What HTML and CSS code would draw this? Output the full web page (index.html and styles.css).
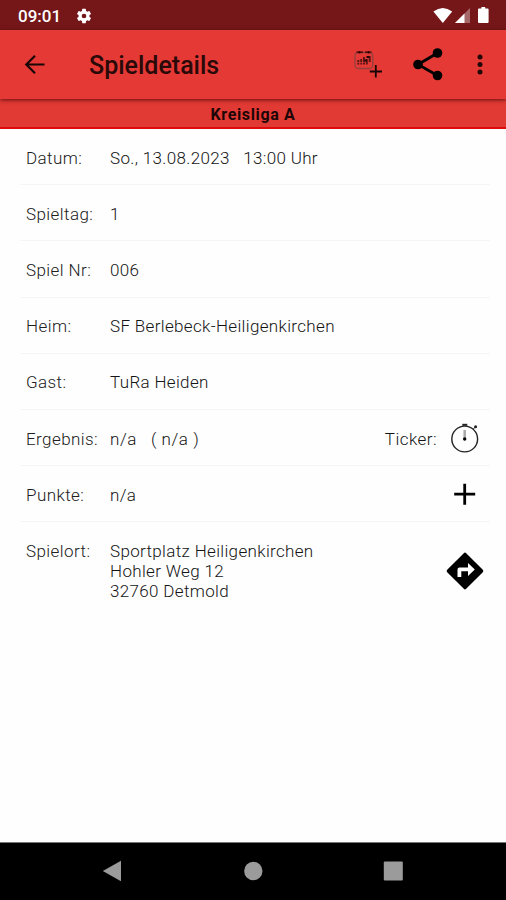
FILE: index.html
```html
<!DOCTYPE html>
<html lang="de">
<head>
<meta charset="utf-8">
<title>Spieldetails</title>
<link rel="stylesheet" href="styles.css">
</head>
<body>
<div class="screen">
  <div class="status">
    <span class="clock">09:01</span>
    <svg class="gear" width="18" height="18" viewBox="0 0 24 24" fill="#fff"><path d="M19.14 12.94c.04-.3.06-.61.06-.94 0-.32-.02-.64-.07-.94l2.03-1.58a.49.49 0 0 0 .12-.61l-1.92-3.32a.49.49 0 0 0-.59-.22l-2.39.96c-.5-.38-1.03-.7-1.62-.94l-.36-2.54a.48.48 0 0 0-.48-.41h-3.84c-.24 0-.43.17-.47.41l-.36 2.54c-.59.24-1.13.57-1.62.94l-2.39-.96a.49.49 0 0 0-.59.22L2.74 8.87c-.12.21-.08.47.12.61l2.03 1.58c-.05.3-.09.63-.09.94s.02.64.07.94l-2.03 1.58a.49.49 0 0 0-.12.61l1.92 3.32c.12.22.37.29.59.22l2.39-.96c.5.38 1.03.7 1.62.94l.36 2.54c.05.24.24.41.48.41h3.84c.24 0 .44-.17.47-.41l.36-2.54c.59-.24 1.13-.56 1.62-.94l2.39.96c.22.08.47 0 .59-.22l1.92-3.32a.49.49 0 0 0-.12-.61zM12 15.1A3.1 3.1 0 1 1 12 8.9a3.1 3.1 0 0 1 0 6.200z"/></svg>
    <svg class="signals" width="60" height="18" viewBox="0 0 60 18">
      <path fill="#fff" d="M.4 4.600Q9.800-2.800 19.200 4.600L9.800 16z"/>
      <path fill="#fff" opacity=".35" d="M37 1v15H22z"/>
      <path fill="#fff" d="M31.500 6.500V16H22z"/>
      <path fill="#fff" d="M48.400 0h3.800v1.600h2.400q1 0 1 1V15q0 1-1 1h-8.600q-1 0-1-1V2.600q0-1 1-1h2.400z"/>
    </svg>
  </div>
  <header class="bar">
    <svg class="back" width="22" height="22" viewBox="0 0 22 22" fill="none" stroke="#180707" stroke-width="2.200"><path d="M20.500 10.500H3M11 1.800l-8.700 8.700 8.700 8.700"/></svg>
    <h1>Spieldetails</h1>
    <svg class="cal" width="30" height="30" viewBox="0 0 30 30" fill="none">
      <rect x="1" y="2.500" width="17.800" height="16" rx="3.500" stroke="#93403f" stroke-width="1.300"/>
      <path d="M2.500 2.200h15" stroke="#300" stroke-width="1.300" stroke-dasharray="6.500 2"/>
      <path d="M5.500 1v2.400M14.500 1v2.400" stroke="#300" stroke-width="1.500"/>
      <path d="M4.300 10v2M4.300 12.800v1.700M7.200 9v3M7.200 12.800v1.700M10 7v5.200M10 12.800v1.700M12.800 9v5.500M15.700 6v6" stroke="#5b1515" stroke-width="1.900"/>
      <path d="M10.500 10.500h2.500M12.500 7h3" stroke="#280505" stroke-width="1.800"/>
      <path d="M21.800 15v12.500M15.800 21.500h12.200" stroke="#170505" stroke-width="1.800"/>
    </svg>
    <svg class="share" width="32" height="34" viewBox="0 0 32 34" fill="#000"><path d="M25.500 5L6 16.500l19.500 11" fill="none" stroke="#000" stroke-width="2.800"/><circle cx="25.500" cy="5" r="4.800"/><circle cx="6" cy="16.500" r="4.800"/><circle cx="25.500" cy="27.500" r="4.800"/></svg>
    <svg class="more" width="8" height="22" viewBox="0 0 8 22" fill="#210808"><circle cx="4" cy="3" r="2.500"/><circle cx="4" cy="10.500" r="2.500"/><circle cx="4" cy="18" r="2.500"/></svg>
  </header>
  <div class="league">Kreisliga A</div>
  <main class="rows">
    <div class="row"><span class="label">Datum:</span><span class="value date">So., 13.08.2023 &nbsp; 13:00 Uhr</span></div>
    <div class="row"><span class="label">Spieltag:</span><span class="value">1</span></div>
    <div class="row"><span class="label">Spiel Nr:</span><span class="value">006</span></div>
    <div class="row"><span class="label">Heim:</span><span class="value">SF Berlebeck-Heiligenkirchen</span></div>
    <div class="row"><span class="label">Gast:</span><span class="value">TuRa Heiden</span></div>
    <div class="row"><span class="label">Ergebnis:</span><span class="value result">n/a &nbsp; ( n/a )</span><span class="ticker">Ticker:</span>
      <svg class="icon" width="38" height="38" viewBox="0 0 38 38" fill="none" stroke="#222"><circle cx="18.700" cy="19" r="12.900" stroke-width="1.400"/><path d="M16.300 4.800h5" stroke-width="2"/><path d="M27.300 9l2.500-2.500" stroke-width="1"/><circle cx="29.600" cy="6.700" r="1.500" fill="#222" stroke="none"/><path d="M18.700 10v8" stroke="#aaa" stroke-width="2.600"/><circle cx="18.700" cy="19" r="1.700" fill="#000" stroke="none"/></svg></div>
    <div class="row"><span class="label">Punkte:</span><span class="value">n/a</span>
      <svg class="icon" width="38" height="38" viewBox="0 0 38 38" stroke="#000" stroke-width="2.800"><path d="M18.700 7.700v21M8.200 18.200h21"/></svg></div>
    <div class="row place"><span class="label">Spielort:</span><span class="value">Sportplatz Heiligenkirchen<br>Hohler Weg 12<br>32760 Detmold</span>
      <svg class="icon" width="38" height="38" viewBox="0 0 38 38"><path d="M17.800 1.200q1.200-1.200 2.400 0l16.600 16.600q1.200 1.200 0 2.400L20.200 36.800q-1.200 1.200-2.400 0L1.200 20.200q-1.200-1.200 0-2.400z"/><path fill="#fff" d="M11.500 25v-7.500q0-2 2-2H22v-4.600l6.800 6.500L22 24v-4.800h-6.700V25z"/></svg></div>
  </main>
  <nav class="nav">
    <svg width="20" height="22" viewBox="0 0 20 22" fill="#9b9b9b"><path d="M.8 11L19 .7v20.600z"/></svg>
    <svg width="20" height="22" viewBox="0 0 20 22" fill="#9b9b9b"><circle cx="10.300" cy="11" r="9.200"/></svg>
    <svg width="20" height="22" viewBox="0 0 20 22" fill="#9b9b9b"><rect x=".8" y="1.500" width="19" height="19" rx="1"/></svg>
  </nav>
</div>
</body>
</html>
```
FILE: styles.css
```css
* { box-sizing: border-box; }
body { margin: 0; font-family: Roboto, sans-serif; background: #fefefe; }
svg { display: block; flex: none; }
.screen { width: 506px; height: 900px; display: flex; flex-direction: column; overflow: hidden; }
.status { height: 30px; flex: none; background: #751718; color: #fff; display: flex; align-items: center; padding: 1px 11px 0 18px; }
.clock { font-size: 17px; font-weight: 500; line-height: 20px; width: 57px; }
.signals { margin-left: auto; margin-right: 2px; }
.bar { height: 69px; flex: none; background: #e53935; display: flex; align-items: center; padding: 0 22px 0 24px; box-shadow: 0 1px 4px rgba(60, 0, 0, .75); z-index: 1; }
h1 { margin: 3px auto 0 43px; font-size: 25px; font-weight: 500; line-height: 30px; color: #2a0909; }
.cal { margin-right: 28px; }
.share { margin-right: 32px; }
.league { height: 30px; flex: none; background: #e13934; border-bottom: 2px solid #df0b0b; color: #1c0606; font-size: 16px; font-weight: 700; letter-spacing: .65px; line-height: 32px; text-align: center; }
.rows { flex: 1; padding: 0 16px 0 20px; }
.row { height: 56.200px; display: flex; align-items: center; padding: 2px 6px 0; border-bottom: 1px solid #f5f5f5; font-size: 17px; font-weight: 300; letter-spacing: .34px; line-height: 20px; color: #141414; }
.label { width: 84px; flex: none; white-space: nowrap; letter-spacing: .42px; color: #202020; }
.value { flex: 1; white-space: nowrap; }
.result { letter-spacing: .55px; }
.ticker { margin-right: 9px; letter-spacing: .45px; }
.place { height: auto; align-items: flex-start; padding-top: 19px; border: 0; }
.place .icon { margin-top: 11px; }
.nav { height: 58px; flex: none; background: #000; border-top: 1px solid #777; display: flex; justify-content: space-between; align-items: center; padding: 0 103px 2px 102px; }
```
